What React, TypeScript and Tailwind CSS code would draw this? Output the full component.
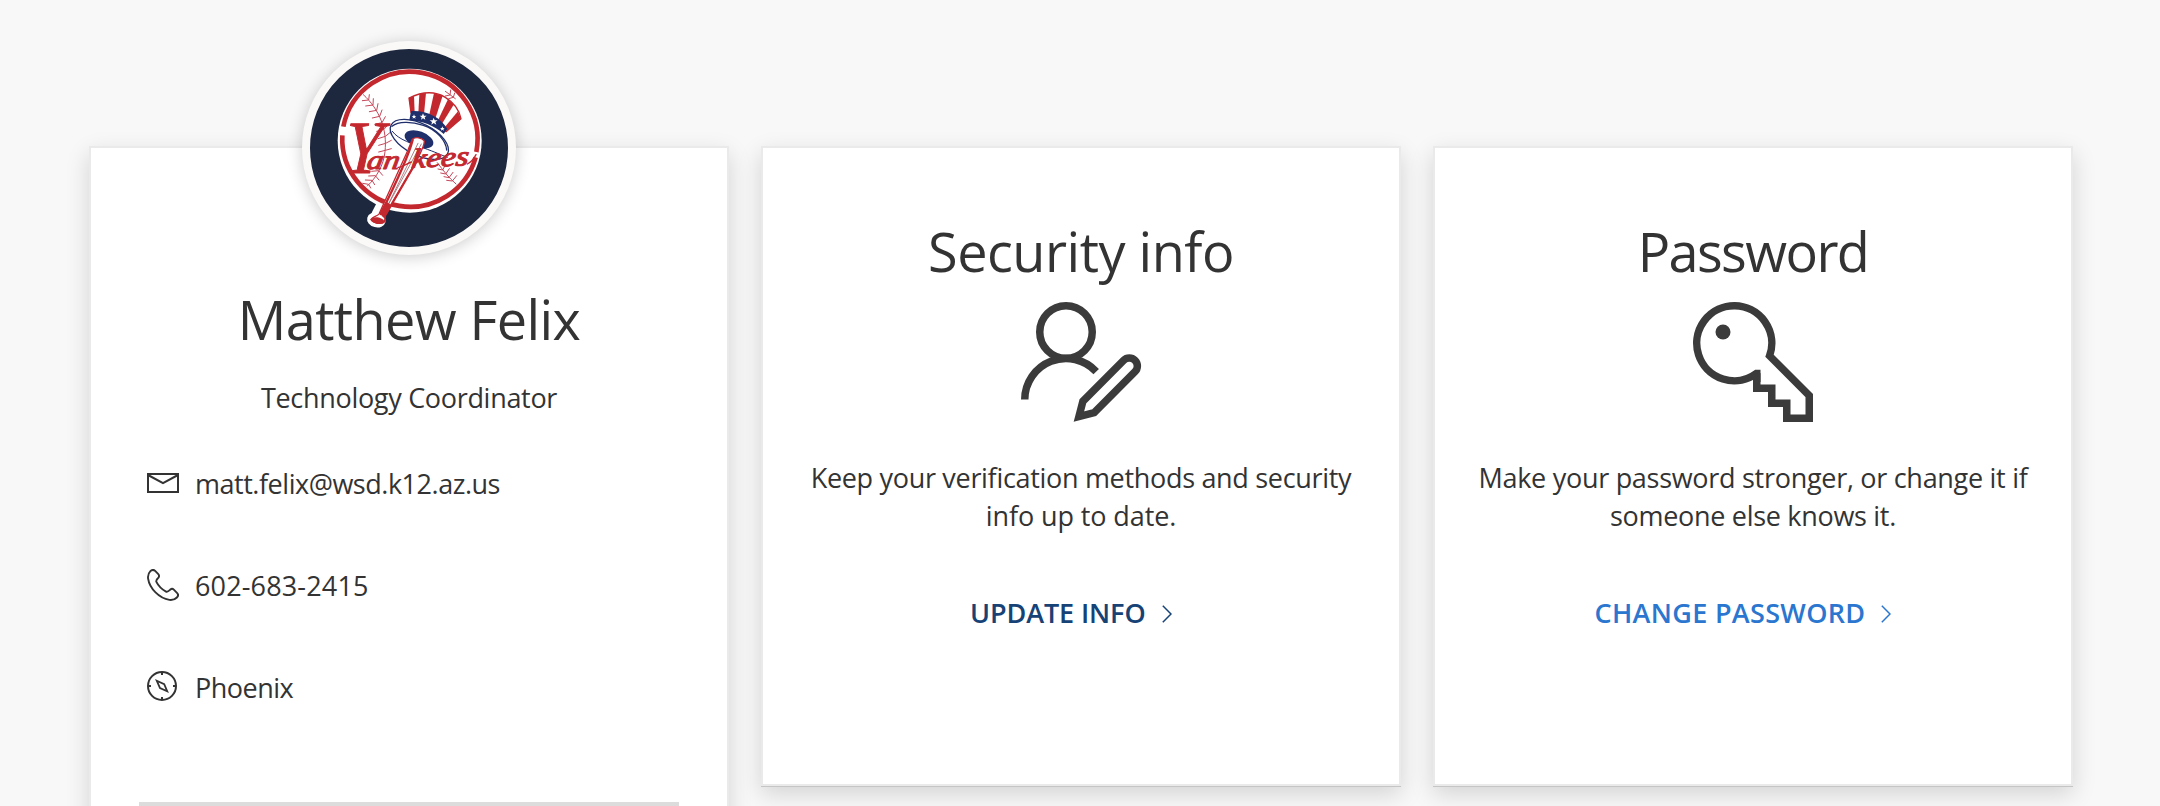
import type { ReactNode } from "react";

function TeamLogo() {
  return (
    <svg viewBox="-60 -33 594 594" className="size-full" aria-hidden="true">
      <g strokeLinecap="round" strokeLinejoin="round">
        <circle cx="239" cy="242" r="216" fill="#fff" />
        <path d="M166 418 L142 464" stroke="#fff" strokeWidth="36" />
        <ellipse cx="139" cy="480" rx="28" ry="22" fill="#fff" transform="rotate(14 139 480)" />
        <path d="M40 200 A203 203 0 0 1 439 276" fill="none" stroke="#c4282f" strokeWidth="14" strokeLinecap="butt" />
        <path d="M437 292 A204 204 0 0 1 37 226" fill="none" stroke="#c4282f" strokeWidth="14" strokeLinecap="butt" />

        <g fill="none" stroke="#c4485a" strokeWidth="3">
          <path d="M100 104 C150 150 172 210 165 275 C161 315 140 352 112 378" />
          <path d="M97 122 L116 120 L118 104 M107 138 L129 135 L130 116 M118 155 L140 151 L144 131 M127 174 L149 169 L156 150 M134 193 L156 188 L166 170 M140 214 L162 208 L175 193 M144 236 L166 229 L181 217 M146 256 L167 250 L184 241 M146 276 L166 271 L184 266 M144 294 L163 291 L181 291 M125 334 L146 332 L158 346 M116 348 L136 347 L147 360 M106 360 L126 361 L134 374 M98 370 L116 373 L122 384" />
          <path d="M322 308 C340 332 355 352 378 372" />
          <path d="M324 327 L338 330 L346 315 M332 339 L347 342 L358 326 M342 350 L357 353 L369 337 M350 361 L367 363 L380 347" />
          <path d="M346 94 L376 116 M346 108 L360 105 L362 90 M356 116 L370 112 L374 99" />
        </g>

        <ellipse cx="268" cy="238" rx="95" ry="47" transform="rotate(27 268 238)" fill="#fff" stroke="#1f2f6b" strokeWidth="4" />
        <path d="M187 214 C206 240 245 250 292 268 C325 280 345 290 352 292" fill="none" stroke="#1f2f6b" strokeWidth="3" />
        <path d="M186 199 C205 184 243 184 280 196 C320 209 348 243 350 270" fill="none" stroke="#1f2f6b" strokeWidth="4" />
        <path d="M243 158 L237 114 C278 94 316 94 346 112 C372 128 388 150 393 176 L348 215 C335 184 290 158 243 158Z" fill="#fff" stroke="#c4282f" strokeWidth="4" />
        <g fill="#c4282f">
          <path d="M237 114 L252 108 L254 158 L243 158Z" />
          <path d="M268 102 L288 99 L282 163 L265 159Z" />
          <path d="M312 99 L338 107 L316 176 L297 168Z" />
          <path d="M354 118 L371 134 L336 191 L324 181Z" />
          <path d="M384 154 L393 176 L350 214 L344 202Z" />
        </g>
        <path d="M243 153 C288 150 334 172 352 207 L341 222 C312 196 276 183 238 181Z" fill="#1f2f6b" />
        <g fill="#fff">
          <path d="M252 163 l2 5 5 0 -4 3 2 5 -5 -3 -4 3 1 -5 -4 -3 5 0z" />
          <path d="M279 160 l3 7 8 0 -6 5 2 7 -7 -4 -6 4 2 -7 -6 -5 7 0z" />
          <path d="M311 173 l3 8 9 0 -7 5 3 8 -8 -5 -7 5 2 -8 -7 -5 9 0z" />
          <path d="M337 199 l2 5 5 0 -4 3 2 5 -5 -3 -4 3 1 -5 -4 -3 5 0z" />
        </g>
        <ellipse cx="267" cy="238" rx="45" ry="24" transform="rotate(20 267 238)" fill="#1f2f6b" />

        <path d="M247 238 C256 230 276 232 283 243 C283 258 272 278 262 298 L168 462 C164 472 165 480 163 486 C155 494 130 490 124 480 C124 470 142 470 147 462 L234 270Z" fill="#fff" stroke="#c4282f" strokeWidth="4" />
        <path d="M248 240 C238 280 210 345 152 462 M262 300 L168 462" fill="none" stroke="#c4282f" strokeWidth="7" />
        <path d="M264 250 L158 468 M274 252 L166 450" fill="none" stroke="#a06a70" strokeWidth="2.5" />
        <path d="M120 478 C132 466 158 472 164 484 C158 497 130 494 120 478Z M148 460 L168 424 L182 434 L164 476Z" fill="#c4282f" />

        <g fill="#c4282f" stroke="#c4282f" className="font-['Liberation_Serif',serif] italic">
          <text x="0" y="0" fontSize="226" strokeWidth="3" textLength="112" lengthAdjust="spacingAndGlyphs" transform="translate(40 338) skewX(-4)">Y</text>
          <text x="0" y="0" fontSize="82" strokeWidth="3" textLength="98" lengthAdjust="spacingAndGlyphs" transform="translate(108 326) skewX(-10)">an</text>
          <text x="0" y="0" fontSize="82" strokeWidth="3" textLength="172" lengthAdjust="spacingAndGlyphs" transform="translate(242 324) rotate(-3) skewX(-10)">kees</text>
        </g>
        <path d="M204 322 C216 324 226 312 244 306 M412 312 C424 306 432 296 438 284" fill="none" stroke="#c4282f" strokeWidth="4" />
      </g>
    </svg>
  );
}

function MailIcon() {
  return (
    <svg viewBox="0 0 32 32" className="size-8" fill="none" stroke="#333" strokeWidth="2" aria-hidden="true">
      <path d="M1 7H31V25H1Z" />
      <path d="M1 8L16 16.2L31 8" />
    </svg>
  );
}

function PhoneIcon() {
  return (
    <svg viewBox="0 0 32 32" className="size-8" fill="none" stroke="#333" strokeWidth="1.9" strokeLinejoin="round" aria-hidden="true">
      <path d="M3.4 2.2C4.6 1 6.6 .6 7.9 1.7L11.3 5.2C12.3 6.3 12.3 7.5 11.5 8.6C9.5 10.6 8.6 11.3 9.4 12.9C11.3 16.7 15.4 20.7 19 22.6C20.7 23.4 21.4 22.5 23.4 20.5C24.5 19.6 25.8 19.7 26.8 20.7L30.2 24.1C31.4 25.4 31.2 27.2 29.9 28.5C27.8 30.6 25.4 31.3 22.4 30.9C12.3 29.3 2.6 19.6 1.1 9.6C.7 6.7 1.3 4.3 3.4 2.2Z" />
    </svg>
  );
}

function CompassIcon() {
  return (
    <svg viewBox="0 0 32 32" className="size-8" fill="none" stroke="#333" strokeWidth="2" aria-hidden="true">
      <circle cx="15" cy="15" r="14" />
      <path d="M15 1V4M15 26V29M1 15H4M26 15H29" />
      <path d="M9.8 9.8L17.2 13.2L20.2 20.2L13 17Z" strokeWidth="1.8" />
    </svg>
  );
}

function PersonEditIcon() {
  return (
    <svg viewBox="0 0 120 120" className="size-[120px] overflow-visible" fill="none" stroke="#3b3b3b" strokeWidth="7.5" aria-hidden="true">
      <circle cx="45" cy="30" r="26.25" />
      <path d="M3.75 97.5A41.25 41.25 0 0 1 75.2 69.6" />
      <path d="M57.9 114.6L61.9 99.3L102.6 58.3A8 8 0 0 1 114 69.7L73.2 110.6Z" />
    </svg>
  );
}

function KeyIcon() {
  return (
    <svg viewBox="0 0 120 120" className="size-[120px] overflow-visible" fill="none" stroke="#3b3b3b" strokeWidth="7.5" aria-hidden="true">
      <path
        d="M63.75 71.25A37.5 37.5 0 1 1 76.6 53.8L116.25 93.5V116.25H93.75V101.25H78.75V86.25H63.75Z"
        strokeMiterlimit="2.2"
      />
      <path d="M62 67.7H67.5V80H60V71Z" fill="#3b3b3b" stroke="none" />
      <circle cx="30" cy="30" r="7.5" fill="#3b3b3b" stroke="none" />
    </svg>
  );
}

function Chevron() {
  return (
    <svg viewBox="0 0 10 18" className="mt-0.5 h-[18px] w-2.5" fill="none" stroke="currentColor" strokeWidth="1.5" aria-hidden="true">
      <path d="M.8 .8L9 9L.8 17.2" />
    </svg>
  );
}

function Card({ children, className = "" }: { children: ReactNode; className?: string }) {
  return (
    <section
      className={`relative flex w-[640px] shrink-0 flex-col items-center border-2 border-[#eaeaea] bg-white shadow-[0_1px_0_#c5c5c5,0_8px_22px_rgba(0,0,0,0.15)] ${className}`}
    >
      {children}
    </section>
  );
}

function ContactRow({ icon, children }: { icon: ReactNode; children: ReactNode }) {
  return (
    <li className="flex h-[38px] items-center gap-4">
      {icon}
      <span className="pt-0.5">{children}</span>
    </li>
  );
}

export default function App() {
  return (
    <main className="flex h-[806px] w-[2160px] items-start gap-8 overflow-hidden bg-[#f8f8f8] pt-[146px] pl-[89px] font-['Open_Sans','Noto_Sans',sans-serif] text-[27px] leading-[38px] text-[#333]">
      <Card className="h-[800px] pt-[135px]">
        <div className="absolute -top-[107px] left-[211px] size-[214px] overflow-hidden rounded-full border-8 border-[#faf9f8] bg-[#1d273d] shadow-[0_2px_16px_rgba(0,0,0,0.2)]">
          <TeamLogo />
        </div>
        <h1 className="text-[54px] leading-[72px] tracking-[-0.6px]">Matthew Felix</h1>
        <p className="mt-6 tracking-[-0.31px]">Technology Coordinator</p>
        <ul className="mt-[47px] flex w-full flex-col gap-16 pl-14">
          <ContactRow icon={<MailIcon />}>
            <span className="tracking-[-0.47px]">matt.felix@wsd.k12.az.us</span>
          </ContactRow>
          <ContactRow icon={<PhoneIcon />}>
            <span className="tracking-[0.15px]">602-683-2415</span>
          </ContactRow>
          <ContactRow icon={<CompassIcon />}>
            <span className="tracking-[-0.5px]">Phoenix</span>
          </ContactRow>
        </ul>
        <div className="mt-24 h-1.5 w-[540px] bg-[#dcdcdc]" />
      </Card>

      <Card className="h-[640px] pt-[67px]">
        <h2 className="text-[54px] leading-[72px] tracking-[-0.5px]">Security info</h2>
        <div className="mt-[15px]">
          <PersonEditIcon />
        </div>
        <p className="mt-[37px] text-center whitespace-nowrap">
          <span className="tracking-[-0.31px]">Keep your verification methods and security</span>
          <br />
          <span className="tracking-[-0.1px]">info up to date.</span>
        </p>
        <a href="#" className="mt-[59px] flex w-[224px] items-center gap-4 pl-px font-semibold tracking-[-0.1px] whitespace-nowrap text-[#174276]">
          UPDATE INFO
          <Chevron />
        </a>
      </Card>

      <Card className="h-[640px] pt-[67px]">
        <h2 className="text-[54px] leading-[72px] tracking-[-1.6px]">Password</h2>
        <div className="mt-[15px]">
          <KeyIcon />
        </div>
        <p className="mt-[37px] text-center whitespace-nowrap">
          <span className="tracking-[-0.29px]">Make your password stronger, or change it if</span>
          <br />
          <span className="tracking-[-0.3px]">someone else knows it.</span>
        </p>
        <a href="#" className="mt-[59px] flex w-[317px] items-center gap-4 font-semibold tracking-[0.33px] whitespace-nowrap text-[#2b76cf]">
          CHANGE PASSWORD
          <Chevron />
        </a>
      </Card>
    </main>
  );
}
